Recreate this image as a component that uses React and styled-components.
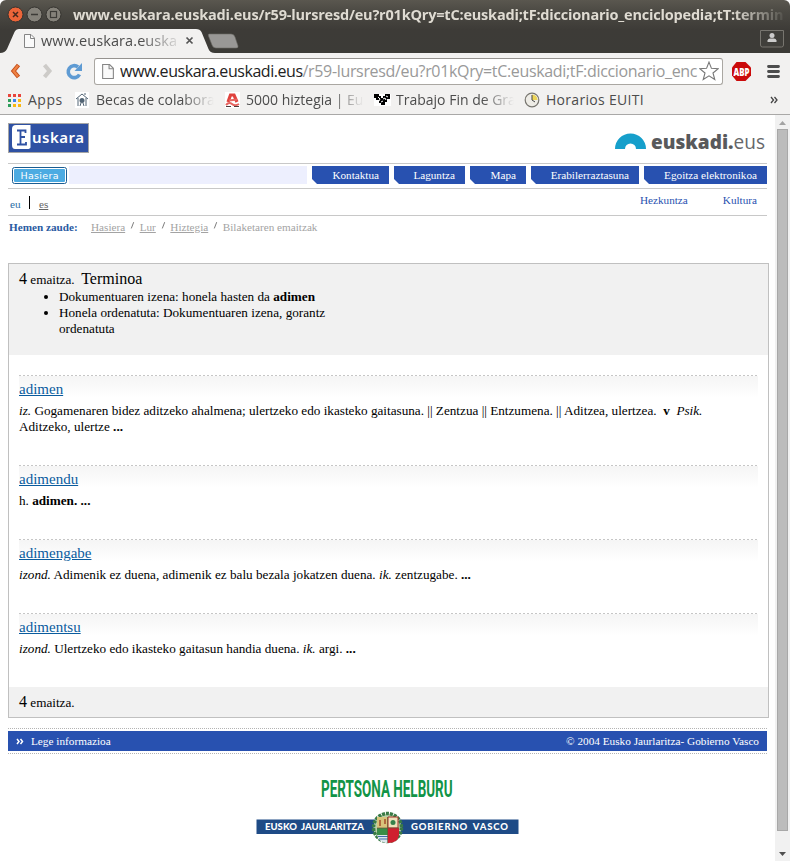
import React from "react";
import styled, { createGlobalStyle } from "styled-components";

const Global = createGlobalStyle`
  * { box-sizing: border-box; }
  body { margin: 0; background: #fff; overflow: hidden; }
  a { color: inherit; }
`;

const ui = `"Open Sans", "Noto Sans", sans-serif`;
const serif = `"Liberation Serif", "Times New Roman", serif`;

const Window = styled.div`
  width: 790px;
  height: 861px;
  display: flex;
  flex-direction: column;
  overflow: hidden;
  font-family: ${serif};
  color: #000;
`;

/* ---------- window frame ---------- */
const Frame = styled.header`
  height: 53px;
  flex: none;
  background: linear-gradient(#5a574f 0, #4b4943 12px, #3d3b37 30px, #3c3b37 53px);
  border-radius: 6px 6px 0 0;
  overflow: hidden;
`;
const TitleBar = styled.div`
  height: 28px;
  display: flex;
  align-items: center;
  padding-left: 7px;
`;
const Controls = styled.svg`
  flex: none;
  width: 66px;
  height: 20px;
`;
const WindowTitle = styled.div`
  width: 711px;
  height: 24px;
  overflow: hidden;
  white-space: nowrap;
  font: 700 14.5px/24px ${ui};
  letter-spacing: ${(p) => p.$track};
  color: #dfdbd2;
  margin-top: 2px;
  mask-image: linear-gradient(90deg, #000 660px, transparent 715px);
`;
const TabStrip = styled.div`
  height: 25px;
  display: flex;
  align-items: flex-start;
  justify-content: space-between;
`;
const Tabs = styled.div`
  display: grid;
  & > * { grid-area: 1 / 1; }
`;
const TabShape = styled.svg`
  display: block;
  width: 250px;
  height: 25px;
`;
const TabContent = styled.div`
  display: flex;
  align-items: center;
  height: 25px;
  padding-left: 24px;
  gap: 6px;
  z-index: 1;
`;
const TabLabel = styled.div`
  width: 138px;
  overflow: hidden;
  white-space: nowrap;
  font: 14.5px/22px ${ui};
  letter-spacing: ${(p) => p.$track};
  color: #4c4c4c;
  mask-image: linear-gradient(90deg, #000 100px, transparent 142px);
`;
const Profile = styled.svg`
  width: 26px;
  height: 19px;
  margin: 1px 5px 0 0;
`;

/* ---------- toolbar ---------- */
const Toolbar = styled.div`
  height: 37px;
  flex: none;
  background: #f2f1f0;
  display: flex;
  align-items: center;
`;
const NavIcons = styled.svg`
  width: 94px;
  height: 37px;
  flex: none;
`;
const Omnibox = styled.div`
  width: 629px;
  height: 27px;
  flex: none;
  margin-top: -1px;
  border: 1px solid #aaa7a2;
  border-top-color: #96938f;
  border-radius: 3px;
  background: #fff;
  display: flex;
  align-items: center;
  padding: 0 3px 0 7px;
`;
const Url = styled.div`
  width: 579px;
  margin-left: 6px;
  overflow: hidden;
  white-space: nowrap;
  font: 16px/24px ${ui};
  letter-spacing: ${(p) => p.$track};
  color: #999;
`;
const Host = styled.span`
  color: #222;
  letter-spacing: ${(p) => p.$track};
`;
const ToolIcons = styled.svg`
  width: 67px;
  height: 37px;
  flex: none;
`;
const Bookmarks = styled.div`
  height: 25px;
  flex: none;
  background: #f2f1f0;
  border-bottom: 1px solid #a9a8a7;
  display: flex;
  align-items: center;
  padding: 0 12px 4px 8px;
`;
const Bookmark = styled.div`
  display: flex;
  align-items: center;
  gap: ${(p) => p.$gap}px;
  width: ${(p) => p.$w}px;
  padding-right: ${(p) => p.$end || 0}px;
  flex: none;
`;
const BookmarkText = styled.span`
  flex: 1;
  overflow: hidden;
  white-space: nowrap;
  font: 14px/20px ${ui};
  letter-spacing: ${(p) => p.$track || "0"};
  color: #4c4c4c;
  ${(p) => p.$fade && `mask-image: linear-gradient(90deg, #000 calc(100% - 32px), transparent);`}
`;
const Overflow = styled.svg`
  margin-left: auto;
`;
const Icon = styled.svg`
  flex: none;
  display: block;
`;

/* ---------- page ---------- */
const Viewport = styled.div`
  flex: 1;
  min-height: 0;
  display: flex;
`;
const Page = styled.main`
  width: 775px;
  padding: 8px 6px 0 8px;
`;
const Brand = styled.div`
  display: flex;
  justify-content: space-between;
  width: 759px;
  height: 40px;
`;
const NavBar = styled.nav`
  width: 759px;
  height: 26px;
  border-top: 1px solid #c8c8c8;
  border-bottom: 1px solid #c8c8c8;
  display: flex;
  align-items: flex-start;
  gap: 5px;
  padding-top: 2px;
`;
const HomeCell = styled.div`
  width: 299px;
  height: 18px;
  display: flex;
  gap: 2px;
  padding-left: 4px;
`;
const HomeButton = styled.svg`
  width: 55px;
  height: 17px;
  margin-top: 1px;
`;
const HomeFill = styled.div`
  flex: 1;
  background: #edeffe;
`;
const NavButton = styled.a`
  width: ${(p) => p.$w}px;
  height: 18px;
  background: #2851b0;
  clip-path: polygon(0 0, 100% 0, 100% 100%, 5px 100%, 0 13px);
  color: #fff;
  font: 11.2px/18px ${serif};
  text-align: right;
  padding-right: 10px;
  white-space: nowrap;
`;
const LangRow = styled.div`
  width: 759px;
  height: 27px;
  border-bottom: 1px solid #c8c8c8;
  display: flex;
  justify-content: space-between;
  padding: 0 10px 0 2px;
  font: 11.2px/13px ${serif};
`;
const Langs = styled.div`
  display: flex;
  padding-top: 7px;
`;
const Lang = styled.span`
  margin-top: 2px;
  color: ${(p) => (p.$link ? "#666" : "#2b6ea6")};
  text-decoration: ${(p) => (p.$link ? "underline" : "none")};
`;
const Divider = styled.span`
  width: 1px;
  height: 13px;
  background: #000;
  margin: 0 9px 0 8.4px;
`;
const Topics = styled.div`
  display: flex;
  gap: 35px;
  padding-top: 5px;
  color: #2851b0;
`;
const Crumbs = styled.div`
  display: flex;
  height: 47px;
  padding: 5px 0 0 1px;
  font: 11.2px/13px ${serif};
  color: #a3a3a3;
`;
const CrumbLabel = styled.b`
  color: #2a5ba2;
  width: 82px;
`;
const Slash = styled.svg`
  width: 14.5px;
  height: 10px;
  margin-top: 1px;
`;
const Results = styled.section`
  width: 761px;
  height: 455px;
  border: 1px solid #c0c0c0;
  font: 13.2px/16px ${serif};
`;
const Summary = styled.div`
  height: 91px;
  background: #f1f1f1;
  padding: 5px 10px 0;
`;
const SummaryLine = styled.div`
  height: 20px;
  line-height: 20px;
  white-space: pre;
`;
const Big = styled.span`
  font-size: 16px;
`;
const Criteria = styled.ul`
  margin: 0;
  padding: 0 0 0 40px;
  width: 325px;
`;
const List = styled.div`
  padding: 20px 10px 0;
`;
const Entry = styled.article`
  padding: 1px 0 30px;
  background:
    repeating-linear-gradient(90deg, #c6c6c6 0 2px, #fff 2px 4px) no-repeat 0 0 / 100% 1px,
    linear-gradient(#f5f5f5, #fff) no-repeat 0 1px / 100% 22px;
`;
const Term = styled.a`
  display: block;
  height: 27px;
  padding-top: 4px;
  font-size: 15px;
  line-height: 18px;
  color: #0a5c9e;
  text-decoration: underline;
`;
const Definition = styled.div`
  white-space: pre;
`;
const ResultsFoot = styled.div`
  height: 30px;
  background: #f1f1f1;
  padding: 5px 10px;
  line-height: 20px;
`;
const Legal = styled.footer`
  width: 759px;
  margin-top: 10px;
  padding: 2px 0;
  border-top: 1px dotted #b4b4b4;
  border-bottom: 1px dotted #b4b4b4;
`;
const LegalBar = styled.div`
  height: 20px;
  background: #2851b0;
  color: #fff;
  font: 11.25px/20px ${serif};
  display: flex;
  align-items: center;
  padding: 0 8px;
`;
const LegalLink = styled.span`
  margin: 0 auto 0 7px;
`;
const GovLogo = styled.svg`
  display: block;
  width: 264px;
  height: 76px;
  margin: 20px 0 0 247px;
`;
const Scrollbar = styled.div`
  width: 15px;
  background: #f1f1f1;
  display: flex;
  flex-direction: column;
  align-items: center;
`;
const Thumb = styled.div`
  width: 11px;
  height: 702px;
  background: #bcbcbc;
  border: 1px solid #a8a8a8;
`;
const Arrow = styled.svg`
  width: 15px;
  height: ${(p) => p.$h}px;
`;

const FileIcon = ({ w = 11, h = 14 }) => (
  <Icon width={w} height={h} viewBox="0 0 11 14">
    <path d="M.5 .5H7L10.500 4V13.500H.5Z" fill="#fafafa" stroke="#858585" />
    <path d="M6.500 .5V4.500H10.500" fill="none" stroke="#858585" />
  </Icon>
);

const EuskaraLogo = () => (
  <Icon width="81" height="30" viewBox="0 0 81 30">
    <rect x=".5" y=".5" width="80" height="29" fill="#2f51a3" stroke="#a5a5a5" />
    <path d="M8 2H22.500V24Q22.500 26 19 26H7Q4 26 4 22V6Q4 2 8 2Z" fill="#fff" />
    <path d="M9 7.500H17.500V10M9 21.500H18V19M12.500 7.500V21.500M12.500 14H17" stroke="#2f51a3" strokeWidth="1.800" fill="none" />
    <text x="24" y="20" fontFamily="Noto Sans" fontWeight="600" fontSize="15" textLength="52" fill="#fff">uskara</text>
  </Icon>
);

const EuskadiLogo = () => (
  <Icon width="152" height="34" viewBox="0 0 152 34">
    <path d="M0 26A15.500 15.500 0 0 1 31 26H21A5.500 5.500 0 0 0 10 26Z" fill="#169fcb" />
    <text x="36" y="26" fontFamily="Open Sans" fontWeight="800" fontSize="20" textLength="114" lengthAdjust="spacingAndGlyphs" fill="#58595b">
      euskadi.<tspan fontWeight="400" fill="#66676a">eus</tspan>
    </text>
  </Icon>
);

const nav = [
  ["Kontaktua", 77],
  ["Laguntza", 71],
  ["Mapa", 56],
  ["Erabilerraztasuna", 108],
  ["Egoitza elektronikoa", 123],
];

const CrumbSlash = () => (
  <Slash viewBox="0 0 15 10">
    <path d="M9 0L6.500 6.500" stroke="#777" fill="none" />
  </Slash>
);

const entries = [
  ["adimen", <><i>iz.</i> Gogamenaren bidez aditzeko ahalmena; ulertzeko edo ikasteko gaitasuna. || Zentzua || Entzumena. || Aditzea, ulertzea.  <b>v</b>  <i>Psik.</i>{"\n"}Aditzeko, ulertze <b>...</b></>],
  ["adimendu", <>h. <b>adimen. ...</b></>],
  ["adimengabe", <><i>izond.</i> Adimenik ez duena, adimenik ez balu bezala jokatzen duena. <i>ik.</i> zentzugabe. <b>...</b></>],
  ["adimentsu", <><i>izond.</i> Ulertzeko edo ikasteko gaitasun handia duena. <i>ik.</i> argi. <b>...</b></>],
];

export default function App() {
  return (
    <Window>
      <Global />
      <Frame>
        <TitleBar>
          <Controls viewBox="0 0 66 20">
            <circle cx="8.500" cy="10.500" r="7.500" fill="#ed6539" stroke="#35332f" />
            <path d="M6 8L11 13M11 8L6 13" stroke="#46281d" strokeWidth="1.500" />
            <circle cx="27.500" cy="10.500" r="7.500" fill="#85827a" stroke="#35332f" />
            <path d="M24 10.500H31" stroke="#3c3b37" strokeWidth="1.300" />
            <circle cx="46.500" cy="10.500" r="7.500" fill="#85827a" stroke="#35332f" />
            <rect x="43.500" y="7.500" width="6" height="6" fill="none" stroke="#3c3b37" strokeWidth="1.200" />
          </Controls>
          <WindowTitle $track="-0.2px">www.euskara.euskadi.eus/r59-lursresd/eu?r01kQry=tC:euskadi;tF:diccionario_enciclopedia;tT:termin</WindowTitle>
        </TitleBar>
        <TabStrip>
          <Tabs>
            <TabShape viewBox="0 0 250 25">
              <path d="M0 25Q5 25 7 21L14.500 4Q16 1 19 1H196Q200 1 201.500 4L208.500 21Q210 25 215 25Z" fill="#f2f1f0" />
              <path d="M209 6H231Q234 6 235 9L238 18Q238.500 20 236 20H216Q213 20 212 17L208.500 8Q208 6 209 6Z" fill="#999896" stroke="#6d6b67" strokeWidth=".6" />
            </TabShape>
            <TabContent>
              <FileIcon />
              <TabLabel $track="0.1px">www.euskara.euska</TabLabel>
              <Icon width="9" height="9" viewBox="0 0 9 9">
                <path d="M1.500 1.500L7.500 7.500M7.500 1.500L1.500 7.500" stroke="#555" strokeWidth="1.700" />
              </Icon>
            </TabContent>
          </Tabs>
          <Profile viewBox="0 0 26 19">
            <path d="M1.500 1.500H24.500V16Q24.500 18 22.500 18H3.500Q1.500 18 1.500 16Z" fill="#403f3b" stroke="#77756f" />
            <circle cx="13" cy="6.500" r="2.500" fill="#ccc" />
            <path d="M8.500 13V11.500Q9 9.500 11 9.500H15Q17 9.500 17.500 11.500V13Z" fill="#ccc" />
          </Profile>
        </TabStrip>
      </Frame>
      <Toolbar>
        <NavIcons viewBox="0 0 94 37">
          <path d="M18.500 12L13.500 18L18.500 24" fill="none" stroke="#c4501f" strokeWidth="4.200" />
          <path d="M18 12.500L13.500 18L18 23.500" fill="none" stroke="#ef8243" strokeWidth="2.200" />
          <path d="M44.500 12L49.500 18L44.500 24" fill="none" stroke="#cdcbc8" strokeWidth="4" />
          <path d="M79.500 21.500A6 6 0 1 1 78 14" fill="none" stroke="#5f9bd3" strokeWidth="3.600" />
          <path d="M82 10V18H74.500Z" fill="#5f9bd3" />
        </NavIcons>
        <Omnibox>
          <FileIcon w={12} h={15} />
          <Url $track="-0.34px"><Host $track="-0.45px">www.euskara.euskadi.eus</Host>/r59-lursresd/eu?r01kQry=tC:euskadi;tF:diccionario_enc</Url>
          <Icon width="20" height="20" viewBox="0 0 18 18">
            <path d="M9 1L11.200 6.600L17.300 7L12.600 10.800L14.200 16.700L9 13.400L3.800 16.700L5.400 10.800L.7 7L6.800 6.600Z" fill="#fff" stroke="#777" strokeWidth="1" />
          </Icon>
        </Omnibox>
        <ToolIcons viewBox="0 0 67 37">
          <path d="M13.500 9H22.500L28 14.500V22.500L22.500 28H13.500L9 22.500V14.500Z" fill="#cb0b0b" />
          <text x="10.500" y="22.500" fontFamily="Open Sans" fontWeight="800" fontSize="10" textLength="16" lengthAdjust="spacingAndGlyphs" fill="#fff">ABP</text>
          <path d="M45.500 13.500H55.500M45.500 18.500H55.500M45.500 23.500H55.500" stroke="#4d4d4d" strokeWidth="2.800" strokeLinecap="round" />
        </ToolIcons>
      </Toolbar>
      <Bookmarks>
        <Bookmark $w={67} $gap={7}>
          <Icon width="13" height="13" viewBox="0 0 13 13">
            {["#e8453c", "#e8453c", "#e8453c", "#2e9e5b", "#3b83ee", "#f9b813", "#2e9e5b", "#f9b813", "#f9b813"].map((c, i) => (
              <rect key={i} x={(i % 3) * 5} y={Math.floor(i / 3) * 5} width="3" height="3" fill={c} />
            ))}
          </Icon>
          <BookmarkText $track="0.5px">Apps</BookmarkText>
        </Bookmark>
        <Bookmark $w={150} $gap={7} $end={11}>
          <Icon width="14" height="16" viewBox="0 0 14 16">
            <rect width="14" height="16" fill="#fff" />
            <path d="M1 7L7 2L13 7M3 6V14M11 6V14M5 14L6 11M9 14L8 11M10 3V1" fill="none" stroke="#536575" />
            <circle cx="7" cy="8.500" r="2.500" fill="#536575" />
          </Icon>
          <BookmarkText $fade>Becas de colabora</BookmarkText>
        </Bookmark>
        <Bookmark $w={149} $gap={6} $end={10}>
          <Icon width="15" height="16" viewBox="0 0 15 16">
            <rect width="15" height="16" fill="#fff" />
            <path d="M3 10L5.500 3H9L12 10" fill="none" stroke="#e0433e" strokeWidth="3.200" />
            <path d="M4 8.500L12 7.500M1 13Q4 9.500 7 12T14 12" fill="none" stroke="#e66561" strokeWidth="2" />
            <path d="M1 14.500H6M9 14.500H14" stroke="#4b3b3b" />
          </Icon>
          <BookmarkText $fade>5000 hiztegia | Eu</BookmarkText>
        </Bookmark>
        <Bookmark $w={150} $gap={5} $end={10}>
          <Icon width="17" height="12" viewBox="0 0 17 12">
            <rect width="17" height="12" fill="#fff" />
            <path d="M0 0H5V2H7V4H9V2H11V0H16V5H13V8H11V11H7V9H5V6H2V4H0Z" fill="#000" />
            <path d="M4 3L6 5L5 7M9 5L11 4L12 6M7 8L9 7M12 2L14 3" fill="none" stroke="#fff" />
          </Icon>
          <BookmarkText $fade>Trabajo Fin de Gra</BookmarkText>
        </Bookmark>
        <Bookmark $w={125} $gap={5}>
          <Icon width="17" height="16" viewBox="0 0 17 16">
            <circle cx="8" cy="8" r="6.800" fill="#eeece6" stroke="#77756f" strokeWidth="1.200" />
            <path d="M8 8V2.500A5.500 5.500 0 0 1 13.500 8Z" fill="#ecd456" />
            <path d="M8 3V8L11 10" fill="none" stroke="#444" />
          </Icon>
          <BookmarkText $track="0.3px">Horarios EUITI</BookmarkText>
        </Bookmark>
        <Overflow width="8" height="8" viewBox="0 0 8 8">
          <path d="M1 1L3.500 4L1 7M4.500 1L7 4L4.500 7" fill="none" stroke="#444" strokeWidth="1.300" />
        </Overflow>
      </Bookmarks>
      <Viewport>
        <Page>
          <Brand>
            <EuskaraLogo />
            <EuskadiLogo />
          </Brand>
          <NavBar>
            <HomeCell>
              <HomeButton viewBox="0 0 55 17">
                <rect x=".5" y=".5" width="54" height="16" rx="2" fill="#fff" stroke="#1b5d92" />
                <rect x="2" y="2" width="51" height="13" rx="1" fill="#4cabe2" />
                <text x="8.500" y="12.200" fontFamily="DejaVu Sans" fontSize="9.500" textLength="38" fill="#fff">Hasiera</text>
              </HomeButton>
              <HomeFill />
            </HomeCell>
            {nav.map(([t, w]) => <NavButton key={t} $w={w}>{t}</NavButton>)}
          </NavBar>
          <LangRow>
            <Langs><Lang>eu</Lang><Divider /><Lang $link>es</Lang></Langs>
            <Topics><span>Hezkuntza</span><span>Kultura</span></Topics>
          </LangRow>
          <Crumbs>
            <CrumbLabel>Hemen zaude:</CrumbLabel>
            <u>Hasiera</u><CrumbSlash /><u>Lur</u><CrumbSlash /><u>Hiztegia</u><CrumbSlash />
            <span>Bilaketaren emaitzak</span>
          </Crumbs>
          <Results>
            <Summary>
              <SummaryLine><Big>4</Big> emaitza.  <Big>Terminoa</Big></SummaryLine>
              <Criteria>
                <li>Dokumentuaren izena: honela hasten da <b>adimen</b></li>
                <li>Honela ordenatuta: Dokumentuaren izena, gorantz ordenatuta</li>
              </Criteria>
            </Summary>
            <List>
              {entries.map(([t, d]) => (
                <Entry key={t}><Term>{t}</Term><Definition>{d}</Definition></Entry>
              ))}
            </List>
            <ResultsFoot><Big>4</Big> emaitza.</ResultsFoot>
          </Results>
          <Legal>
            <LegalBar>
              <Icon width="8" height="7" viewBox="0 0 8 7">
                <path d="M1 1L3 3.500L1 6M4.500 1L6.500 3.500L4.500 6" fill="none" stroke="#fff" strokeWidth="1.500" />
              </Icon>
              <LegalLink>Lege informazioa</LegalLink>
              <span>© 2004 Eusko Jaurlaritza- Gobierno Vasco</span>
            </LegalBar>
          </Legal>
          <GovLogo viewBox="0 0 264 76">
            <g transform="translate(66 22.500) scale(.56 1)">
              <text x="0" y="0" fontFamily="Roboto" fontWeight="700" fontSize="23" textLength="235" lengthAdjust="spacingAndGlyphs" fill="#129447">PERTSONA HELBURU</text>
            </g>
            <rect x="1.500" y="45.500" width="262" height="14.500" fill="#1e4b86" />
            <text x="10" y="56" fontFamily="Lato" fontWeight="900" fontSize="9.500" wordSpacing="2" textLength="99" fill="#fff">EUSKO JAURLARITZA</text>
            <text x="156" y="56" fontFamily="Lato" fontWeight="900" fontSize="9.500" wordSpacing="2" textLength="97" fill="#fff">GOBIERNO VASCO</text>
            <circle cx="132.500" cy="53.500" r="14" fill="#b9cfa9" stroke="#397a45" strokeWidth="3.500" strokeDasharray="3 1" />
            <path d="M122 43H133V54H122Z" fill="#d8c47b" />
            <path d="M133 43H143V54H133Z" fill="#eee2bb" stroke="#a73228" />
            <path d="M122 54H133V61H122Z" fill="#3a8d47" />
            <path d="M122 61H133V69Q124 69 122 61Z" fill="#dce7ed" />
            <path d="M123 62.500H133M124 65H133" stroke="#416ca8" />
            <path d="M133 54H144V61Q143 69 133 69Z" fill="#cf1f2f" />
            <path d="M125 46V52M130 45V50" stroke="#a34c2b" strokeWidth="1.500" />
            <circle cx="138" cy="48.500" r="2.500" fill="#37814a" />
            <path d="M122 54H144M132.500 43V69" stroke="#6c5134" strokeWidth=".7" />
          </GovLogo>
        </Page>
        <Scrollbar>
          <Arrow $h={14} viewBox="0 0 15 14"><path d="M4 10L7.500 6L11 10Z" fill="#a3a3a3" /></Arrow>
          <Thumb />
          <Arrow $h={30} viewBox="0 0 15 30"><path d="M4 21L7.500 25L11 21Z" fill="#4f4f4f" /></Arrow>
        </Scrollbar>
      </Viewport>
    </Window>
  );
}
